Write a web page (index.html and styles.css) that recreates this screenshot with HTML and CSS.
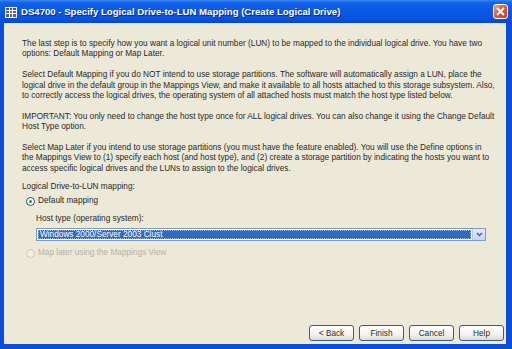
FILE: index.html
```html
<!DOCTYPE html>
<html lang="en">
<head>
    <meta charset="UTF-8">
    <title>DS4700 - Specify Logical Drive-to-LUN Mapping</title>
    <link rel="stylesheet" href="styles.css">
</head>
<body>
    <div class="window">
        <div class="titlebar">
            <svg class="app-icon" width="12" height="11" viewBox="0 0 12 11">
                <rect x="0" y="0" width="12" height="11" fill="#f4f4f4"/>
                <rect x="1" y="1" width="3" height="2" fill="#555"/>
                <rect x="5" y="1" width="2" height="2" fill="#555"/>
                <rect x="8" y="1" width="3" height="2" fill="#555"/>
                <rect x="1" y="4" width="3" height="2" fill="#666"/>
                <rect x="5" y="4" width="2" height="2" fill="#666"/>
                <rect x="8" y="4" width="3" height="2" fill="#666"/>
                <rect x="1" y="7" width="3" height="3" fill="#666"/>
                <rect x="5" y="7" width="2" height="3" fill="#666"/>
                <rect x="8" y="7" width="3" height="3" fill="#666"/>
            </svg>
            <span class="title">DS4700 - Specify Logical Drive-to-LUN Mapping (Create Logical Drive)</span>
            <div class="close-btn">
                <svg width="9" height="9" viewBox="0 0 9 9">
                    <path d="M1 1 L8 8 M8 1 L1 8" stroke="#fff" stroke-width="1.8"/>
                </svg>
            </div>
        </div>

        <div class="frame">
            <div class="content">
                <p>The last step is to specify how you want a logical unit number (LUN) to be mapped to the individual logical drive. You have two<br>options: Default Mapping or Map Later.</p>
                <p>Select Default Mapping if you do NOT intend to use storage partitions. The software will automatically assign a LUN, place the<br>logical drive in the default group in the Mappings View, and make it available to all hosts attached to this storage subsystem. Also,<br>to correctly access the logical drives, the operating system of all attached hosts must match the host type listed below.</p>
                <p>IMPORTANT: You only need to change the host type once for ALL logical drives. You can also change it using the Change Default<br>Host Type option.</p>
                <p>Select Map Later if you intend to use storage partitions (you must have the feature enabled). You will use the Define options in<br>the Mappings View to (1) specify each host (and host type), and (2) create a storage partition by indicating the hosts you want to<br>access specific logical drives and the LUNs to assign to the logical drives.</p>

                <div class="mapping">
                    <div class="group-label">Logical Drive-to-LUN mapping:</div>
                    <div class="radio-row">
                        <span class="radio checked"></span>
                        <span>Default mapping</span>
                    </div>
                    <div class="host-type">
                        <div class="field-label">Host type (operating system):</div>
                        <div class="combo">
                            <div class="combo-value">Windows 2000/Server 2003 Clust</div>
                            <div class="combo-arrow">
                                <svg width="7" height="5" viewBox="0 0 7 5">
                                    <path d="M1 1 L3.5 3.5 L6 1" stroke="#4d6185" stroke-width="1.4" fill="none"/>
                                </svg>
                            </div>
                        </div>
                    </div>
                    <div class="radio-row disabled">
                        <span class="radio"></span>
                        <span>Map later using the Mappings View</span>
                    </div>
                </div>

                <div class="buttons">
                    <button>&lt; Back</button>
                    <button>Finish</button>
                    <button>Cancel</button>
                    <button>Help</button>
                </div>
            </div>
        </div>
    </div>
</body>
</html>
```

FILE: styles.css
```css
body {
    margin: 0;
    padding: 0;
    font-family: "Liberation Sans", Arial, sans-serif;
    background-color: #0b4fd8;
}

.window {
    width: 512px;
    height: 349px;
    display: flex;
    flex-direction: column;
}

.titlebar {
    height: 23px;
    display: flex;
    align-items: center;
    padding: 0 5px 0 5px;
    background: linear-gradient(to bottom, #3b86f2 0%, #1262ea 12%, #0a58e4 45%, #0853e0 80%, #0646cf 100%);
    color: #fff;
}

.app-icon {
    margin-right: 4px;
    margin-top: 1px;
}

.title {
    font-weight: bold;
    font-size: 9.6px;
    flex: 1;
    text-shadow: 1px 1px 0 #0a2a8a;
}

.close-btn {
    width: 13px;
    height: 13px;
    border: 1px solid #fff;
    border-radius: 3px;
    background: linear-gradient(135deg, #f19b7d 0%, #e0583a 50%, #c53a1c 100%);
    display: flex;
    justify-content: center;
    align-items: center;
    margin-right: -1px;
}

.frame {
    flex: 1;
    display: flex;
    padding: 0 6px 5px 4px;
    background-color: #0b4fd8;
}

.content {
    flex: 1;
    display: flex;
    flex-direction: column;
    background-color: #ece9d8;
    padding: 16px 2px 3px 18px;
    font-size: 8.25px;
    line-height: 10.4px;
    color: #2a2a2a;
}

p {
    margin: 0 0 10.4px 0;
}

.mapping {
    margin-top: -2.8px;
}

.group-label {
    height: 10px;
}

.radio-row {
    display: flex;
    align-items: center;
    gap: 3px;
    margin-left: 4px;
    margin-top: 4px;
}

.radio {
    width: 7px;
    height: 7px;
    border: 1px solid #1c5180;
    border-radius: 50%;
    background: #fff;
    display: flex;
    justify-content: center;
    align-items: center;
}

.radio.checked::after {
    content: "";
    width: 3px;
    height: 3px;
    border-radius: 50%;
    background: #21a121;
}

.radio-row.disabled {
    color: #b5b19f;
    margin-top: 7px;
}

.radio-row.disabled .radio {
    border-color: #cac8bb;
    background: #f1efe5;
}

.host-type {
    margin-left: 14px;
    margin-top: 8px;
}

.field-label {
    height: 10px;
}

.combo {
    margin-top: 4px;
    width: 448px;
    height: 11px;
    border: 1px solid #7f9db9;
    background: #fff;
    display: flex;
}

.combo-value {
    flex: 1;
    margin: 1px;
    background-color: #316ac5;
    color: #fff;
    line-height: 9px;
    padding-left: 2px;
    outline: 1px dotted #9fb7e0;
    outline-offset: -1px;
}

.combo-arrow {
    width: 12px;
    background: linear-gradient(to bottom, #e1eafe 0%, #c3d3fd 100%);
    border-left: 1px solid #b9c9ef;
    display: flex;
    justify-content: center;
    align-items: center;
}

.buttons {
    margin-top: auto;
    display: flex;
    justify-content: flex-end;
    gap: 5px;
}

button {
    width: 45px;
    height: 16px;
    padding: 0;
    font-family: "Liberation Sans", Arial, sans-serif;
    font-size: 8.25px;
    color: #2a2a2a;
    border: 1px solid #3c5c84;
    border-radius: 3px;
    background: linear-gradient(to bottom, #ffffff 0%, #f4f3ee 60%, #dcd9cc 100%);
}
```
